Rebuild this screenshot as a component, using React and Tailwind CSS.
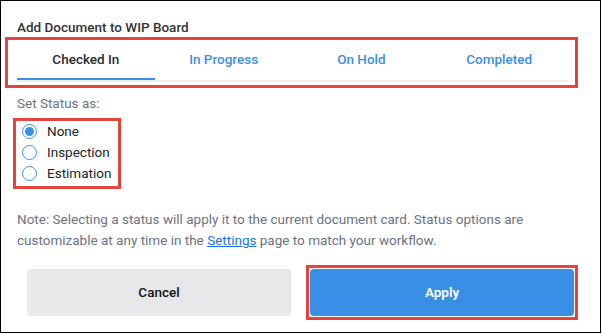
import React from "react";

const tabs = ["Checked In", "In Progress", "On Hold", "Completed"];
const options = ["None", "Inspection", "Estimation"];

export default function App() {
  return (
    <div
      className="w-[601px] h-[333px] border border-black bg-white text-[13.5px]"
      style={{ fontFamily: "Roboto, 'Liberation Sans', sans-serif" }}
    >
      <div className="mt-[16px] ml-[16px] h-[20px] leading-[20px] font-medium text-[#333333]">
        Add Document to WIP Board
      </div>
      <div className="ml-[4px] w-[573px] h-[51px] border-[3px] border-[#e5443e] pl-[9px] pr-[7px]">
        <div className="flex border-b-2 border-[#efefef]">
          {tabs.map((t, i) => (
            <div
              key={t}
              className={
                i === 0
                  ? "flex-1 h-[40px] flex items-center justify-center border-b-2 border-[#3b8ee8] font-medium text-[#2b2b2b]"
                  : "flex-1 h-[40px] flex items-center justify-center border-b-2 border-transparent font-medium text-[#3b8ee8]"
              }
            >
              {t}
            </div>
          ))}
        </div>
      </div>
      <div className="mt-[5px] ml-[16px] h-[20px] leading-[20px] text-[#6b7280]">
        Set Status as:
      </div>
      <div className="mt-[5px] ml-[12px] w-[108px] h-[71px] border-[3px] border-[#e5443e] pl-[6px] pb-[2px]">
        {options.map((o, i) => (
          <div key={o} className="h-[21px] flex items-center">
            <div className="w-[15px] h-[15px] rounded-full border-[1.5px] border-[#3b8ee8] flex items-center justify-center">
              {i === 0 && <div className="w-[9px] h-[9px] rounded-full bg-[#3b8ee8]" />}
            </div>
            <span className="ml-[10px] text-[#222222]">{o}</span>
          </div>
        ))}
      </div>
      <div className="mt-[20px] ml-[16px] w-[565px] leading-[21px] text-[#6b7280]">
        Note: Selecting a status will apply it to the current document card. Status options are
        customizable at any time in the{" "}
        <span className="text-[#1a73e8] underline">Settings</span> page to match your workflow.
      </div>
      <div className="mt-[14px] ml-[26px] flex items-center gap-[15px]">
        <div className="w-[264px] h-[47px] rounded-[4px] bg-[#e8e8ea] flex items-center justify-center font-medium text-[#111111]">
          Cancel
        </div>
        <div className="border-[3px] border-[#e5443e] p-[1px]">
          <div className="w-[264px] h-[47px] rounded-[4px] bg-[#3a8ee6] flex items-center justify-center font-semibold text-white">
            Apply
          </div>
        </div>
      </div>
    </div>
  );
}
